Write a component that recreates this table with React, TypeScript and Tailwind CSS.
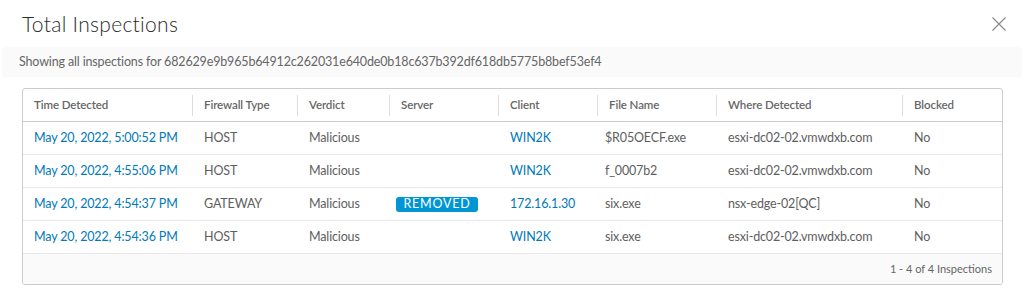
type Row = {
    time: string;
    type: string;
    verdict: string;
    server?: string;
    client: string;
    file: string;
    where: string;
    blocked: string;
};

const ROWS: Row[] = [
    { time: "May 20, 2022, 5:00:52 PM", type: "HOST", verdict: "Malicious", client: "WIN2K", file: "$R05OECF.exe", where: "esxi-dc02-02.vmwdxb.com", blocked: "No" },
    { time: "May 20, 2022, 4:55:06 PM", type: "HOST", verdict: "Malicious", client: "WIN2K", file: "f_0007b2", where: "esxi-dc02-02.vmwdxb.com", blocked: "No" },
    { time: "May 20, 2022, 4:54:37 PM", type: "GATEWAY", verdict: "Malicious", server: "REMOVED", client: "172.16.1.30", file: "six.exe", where: "nsx-edge-02[QC]", blocked: "No" },
    { time: "May 20, 2022, 4:54:36 PM", type: "HOST", verdict: "Malicious", client: "WIN2K", file: "six.exe", where: "esxi-dc02-02.vmwdxb.com", blocked: "No" },
];

const COLS = [
    { label: "Time Detected", w: "w-[170px]" },
    { label: "Firewall Type", w: "w-[105px]" },
    { label: "Verdict", w: "w-[92px]" },
    { label: "Server", w: "w-[109px]" },
    { label: "Client", w: "w-[99px]" },
    { label: "File Name", w: "w-[119px]" },
    { label: "Where Detected", w: "w-[186px]" },
    { label: "Blocked", w: "flex-1" },
];

export default function App() {
    return (
        <div className="w-[1024px] h-[290px] bg-white px-[2px] font-['Lato',sans-serif] text-[#5e5e5e]">
            {/* Header */}
            <div className="flex items-center justify-between h-[47px] pl-[20px] pr-[16px]">
                <h1 className="text-[21px] leading-none font-light text-[#2b2b2b] tracking-[0.3px]">Total Inspections</h1>
                <svg width="14" height="14" viewBox="0 0 14 14" className="mt-[1px]">
                    <path d="M0.5 0.5 L13.5 13.5 M13.5 0.5 L0.5 13.5" stroke="#8a8a8a" strokeWidth="1.2" fill="none" />
                </svg>
            </div>

            <div className="h-[30px] bg-[#fafafa] rounded-[3px] flex items-center pl-[17px] text-[12.5px] tracking-[-0.15px] text-[#666]">
                Showing all inspections for 682629e9b965b64912c262031e640de0b18c637b392df618db5775b8bef53ef4
            </div>

            {/* Grid */}
            <div className="mt-[11px] ml-[20px] mr-[19px] border border-[#ccc] rounded-[3px] overflow-hidden">
                <div className="flex h-[33px] items-center border-b border-[#ccc] text-[11.5px] font-semibold text-[#666] tracking-[-0.1px]">
                    {COLS.map((c, i) => (
                        <div key={c.label} className={`${c.w} h-[21px] flex items-center pl-[11px] ${i < COLS.length - 1 ? "border-r border-[#ddd]" : ""}`}>
                            {c.label}
                        </div>
                    ))}
                </div>
                {ROWS.map((r, i) => (
                    <div key={i} className="flex h-[33px] items-center border-b border-[#e8e8e8] text-[12.5px] tracking-[-0.15px]">
                        <div className="w-[170px] pl-[11px] text-[#0079b8]">{r.time}</div>
                        <div className="w-[105px] pl-[11px]">{r.type}</div>
                        <div className="w-[92px] pl-[11px]">{r.verdict}</div>
                        <div className="w-[109px] pl-[6px]">
                            {r.server && (
                                <span className="inline-flex items-center justify-center w-[82px] h-[15px] rounded-[3px] bg-[#0095d3] text-white text-[12.5px] tracking-[0.8px]">
                                    {r.server}
                                </span>
                            )}
                        </div>
                        <div className="w-[99px] pl-[11px] text-[#0079b8]">{r.client}</div>
                        <div className="w-[119px] pl-[7px]">{r.file}</div>
                        <div className="w-[186px] pl-[11px]">{r.where}</div>
                        <div className="flex-1 pl-[11px]">{r.blocked}</div>
                    </div>
                ))}
                <div className="h-[30px] bg-[#fafafa] flex items-center justify-end pr-[10px] text-[11px] text-[#666]">
                    1 - 4 of 4 Inspections
                </div>
            </div>
        </div>
    );
}
